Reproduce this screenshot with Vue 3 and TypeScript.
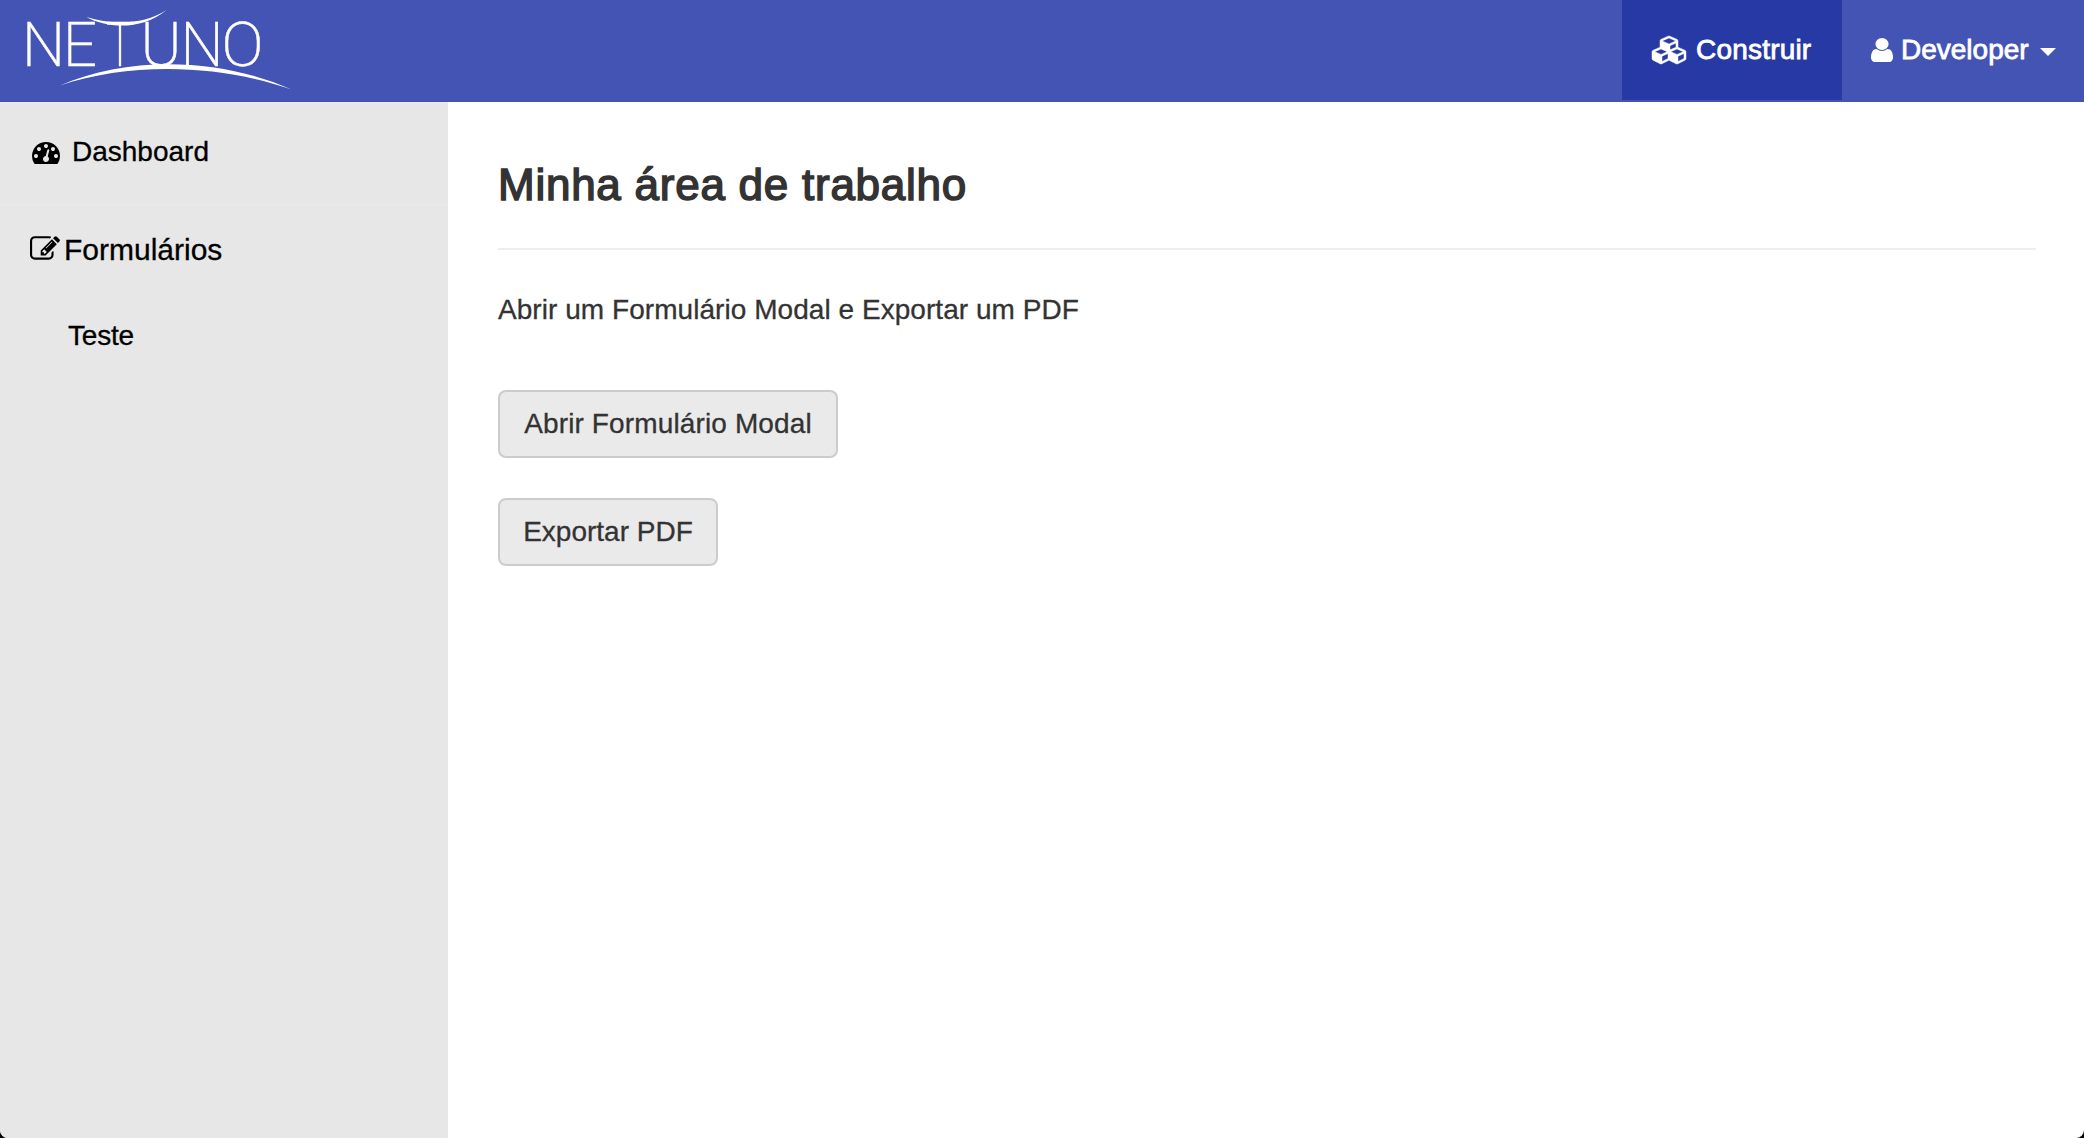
<script setup lang="ts">
interface Letter {
  char: string
  x: number
  width: number
}

const letters: Letter[] = [
  { char: 'N', x: 22, width: 43 },
  { char: 'E', x: 63, width: 34 },
  { char: 'T', x: 106, width: 28 },
  { char: 'U', x: 140.5, width: 41 },
  { char: 'N', x: 180.5, width: 43 },
  { char: 'O', x: 221.5, width: 42 },
]

const actions: { label: string; kind: string }[] = [
  { label: 'Abrir Formulário Modal', kind: 'wide' },
  { label: 'Exportar PDF', kind: 'narrow' },
]
</script>

<template>
  <div class="page">
    <header class="topbar">
      <svg class="logo" width="310" height="100" viewBox="0 0 310 100" role="img" aria-label="Netuno">
        <text
          v-for="(letter, i) in letters"
          :key="i"
          :x="letter.x"
          y="66"
          :textLength="letter.width"
          lengthAdjust="spacingAndGlyphs"
          class="logo-letter"
        >{{ letter.char }}</text>
        <path d="M86.500 17C112 25 144 25 166.500 10C143 30 108 29 86.500 17Z" />
        <path d="M60 85.500C128 56 218 57 291.500 89.500C219 64 130 62 60 85.500Z" />
      </svg>
      <nav class="menu">
        <a class="item active">
          <svg class="cubes" viewBox="0 0 2176 1792" width="34" height="28"><path d="M640 1632l384-192v-314l-384 164v342zm-64-454l404-173-404-173-404 173zm1088 454l384-192v-314l-384 164v342zm-64-454l404-173-404-173-404 173zm-448-293l384-165v-266l-384 164v267zm-64-379l441-189-441-189-441 189zm1088 518v416q0 36-19 67t-52 47l-448 224q-25 14-57 14t-57-14l-448-224q-4-2-7-4-2 2-7 4l-448 224q-25 14-57 14t-57-14l-448-224q-33-16-52-47t-19-67v-416q0-38 21.500-70t56.500-48l434-186v-400q0-38 21.500-70t56.500-48l448-192q23-10 50-10t50 10l448 192q35 16 56.500 48t21.500 70v400l434 186q36 16 57 48t21 70z" /></svg>
          <span class="build">Construir</span>
        </a>
        <a class="item account">
          <svg class="user" viewBox="256 128 1280 1536" width="22" height="24" preserveAspectRatio="none"><path d="M1536 1399q0 109-62.500 187t-150.500 78h-854q-88 0-150.500-78t-62.500-187q0-85 8.500-160.500t31.500-152 58.500-131 94-89 134.500-34.500q131 128 313 128t313-128q76 0 134.500 34.500t94 89 58.500 131 31.500 152 8.500 160.500zm-256-887q0 159-112.500 271.500t-271.500 112.500-271.500-112.500-112.500-271.500 112.500-271.500 271.500-112.500 271.500 112.500 112.500 271.500z" /></svg>
          <span class="name">Developer</span>
          <span class="caret"></span>
        </a>
      </nav>
    </header>
    <div class="body">
      <aside class="sidebar">
        <a class="entry dashboard">
          <svg viewBox="0 0 1792 1792" width="28" height="28"><path d="M384 1152q0-53-37.500-90.500t-90.500-37.500-90.500 37.500-37.500 90.500 37.500 90.500 90.500 37.500 90.500-37.500 37.500-90.500zm192-448q0-53-37.500-90.500t-90.500-37.500-90.500 37.500-37.500 90.500 37.500 90.500 90.500 37.500 90.500-37.500 37.500-90.500zm428 481l101-382q6-26-7.500-48.500t-38.500-29.500-48 6.500-30 39.500l-101 382q-60 5-107 43.500t-63 98.500q-20 77 20 146t117 89 146-20 89-117q16-60-6-117t-72-91zm660-33q0-53-37.500-90.500t-90.500-37.500-90.500 37.500-37.500 90.500 37.500 90.500 90.500 37.500 90.500-37.500 37.500-90.500zm-640-640q0-53-37.500-90.500t-90.500-37.500-90.500 37.500-37.500 90.500 37.500 90.500 90.500 37.500 90.500-37.500 37.500-90.500zm448 192q0-53-37.500-90.500t-90.500-37.500-90.500 37.500-37.500 90.500 37.500 90.500 90.500 37.500 90.500-37.500 37.500-90.500zm320 448q0 261-141 483-19 29-54 29h-1402q-35 0-54-29-141-221-141-483 0-182 71-348t191-286 286-191 348-71 348 71 286 191 191 286 71 348z" /></svg>
          <span>Dashboard</span>
        </a>
        <a class="entry forms">
          <svg viewBox="0 0 1792 1792" width="30" height="30"><path d="M888 1184l116-116-152-152-116 116v56h96v96h56zm440-720q-16-16-33 1l-350 350q-17 17-1 33t33-1l350-350q17-17 1-33zm80 594v190q0 119-84.500 203.500t-203.500 84.500h-832q-119 0-203.500-84.500t-84.500-203.500v-832q0-119 84.500-203.500t203.500-84.500h832q63 0 117 25 15 7 18 23 3 17-9 29l-49 49q-14 14-32 8-23-6-45-6h-832q-66 0-113 47t-47 113v832q0 66 47 113t113 47h832q66 0 113-47t47-113v-126q0-13 9-22l64-64q15-15 35-7t20 29zm-96-738l288 288-672 672h-288v-288zm444 132l-92 92-288-288 92-92q28-28 68-28t68 28l152 152q28 28 28 68t-28 68z" /></svg>
          <span>Formulários</span>
        </a>
        <a class="entry child"><span>Teste</span></a>
      </aside>
      <main class="content">
        <h1>Minha área de trabalho</h1>
        <p>Abrir um Formulário Modal e Exportar um PDF</p>
        <button v-for="action in actions" :key="action.label" :class="action.kind" type="button">
          <span>{{ action.label }}</span>
        </button>
      </main>
    </div>
  </div>
</template>

<style>
body {
  margin: 0;
  background: #000;
}
</style>

<style scoped>
.page {
  display: flex;
  flex-direction: column;
  height: 1138px;
  overflow: hidden;
  border-radius: 0 0 8px 8px;
  background: #fff;
  color: #333;
  font: 28px/40px "Liberation Sans", Arial, sans-serif;
  -webkit-text-stroke: 0.300px currentColor;
}
.topbar {
  display: flex;
  justify-content: space-between;
  box-sizing: border-box;
  height: 102px;
  border-bottom: 2px solid #4352b4;
  background: #4454b4;
  color: #fff;
}
svg {
  display: block;
  flex: none;
  fill: currentColor;
}
.logo-letter {
  font-family: Roboto, sans-serif;
  font-size: 60.500px;
  font-weight: 200;
  stroke: #fff;
  stroke-width: 0.500px;
}
.menu,
.item {
  display: flex;
}
.item {
  box-sizing: border-box;
  align-items: flex-start;
  height: 100px;
  padding-top: 30px;
  -webkit-text-stroke: 0.800px #fff;
}
.active {
  width: 220px;
  padding-left: 30px;
  background: #2739a5;
}
.cubes {
  margin-top: 6px;
  overflow: visible;
  stroke: currentColor;
  stroke-width: 30;
}
.build {
  margin-left: 10px;
  letter-spacing: 0.200px;
}
.account {
  width: 242px;
  padding-left: 29px;
}
.user {
  margin-top: 8px;
}
.name {
  margin-left: 8px;
}
.caret {
  margin: 18px 0 0 11px;
  border: 8px solid transparent;
  border-top-color: #fff;
  border-bottom: 0;
}
.body {
  display: flex;
  flex: 1;
}
.sidebar {
  box-sizing: border-box;
  width: 448px;
  border-top: 2px solid #e9e9e9;
  background: #e7e7e7;
  color: #000;
}
.entry {
  display: flex;
  box-sizing: border-box;
}
.dashboard {
  height: 102px;
  padding: 28px 0 0 32px;
  border-bottom: 2px solid #e9e9e9;
}
.dashboard svg {
  margin: 6px 12px 0 0;
}
.forms {
  height: 86px;
  padding: 24px 0 0 30px;
  font-size: 30px;
}
.forms svg {
  margin: 4px 4px 0 0;
}
.child {
  padding: 24px 0 0 68px;
  letter-spacing: -0.200px;
}
.content {
  display: flex;
  flex: 1;
  flex-direction: column;
  align-items: flex-start;
  padding: 52px 48px 0 50px;
}
h1 {
  box-sizing: border-box;
  width: 100%;
  height: 96px;
  margin: 0 0 40px;
  padding-top: 5px;
  border-bottom: 2px solid #eee;
  font-size: 44px;
  font-weight: 400;
  line-height: 52px;
  letter-spacing: 0.750px;
  -webkit-text-stroke: 1.500px #333;
}
p {
  margin: 0 0 60px;
  letter-spacing: 0.050px;
}
button {
  box-sizing: border-box;
  height: 68px;
  margin: 0 0 40px;
  padding: 0;
  border: 2px solid #ccc;
  border-radius: 8px;
  background: #eaeaea;
  color: #333;
  font: inherit;
  -webkit-text-stroke: 0.300px #333;
}
.wide {
  width: 340px;
  letter-spacing: 0.130px;
}
.narrow {
  width: 220px;
}
</style>
